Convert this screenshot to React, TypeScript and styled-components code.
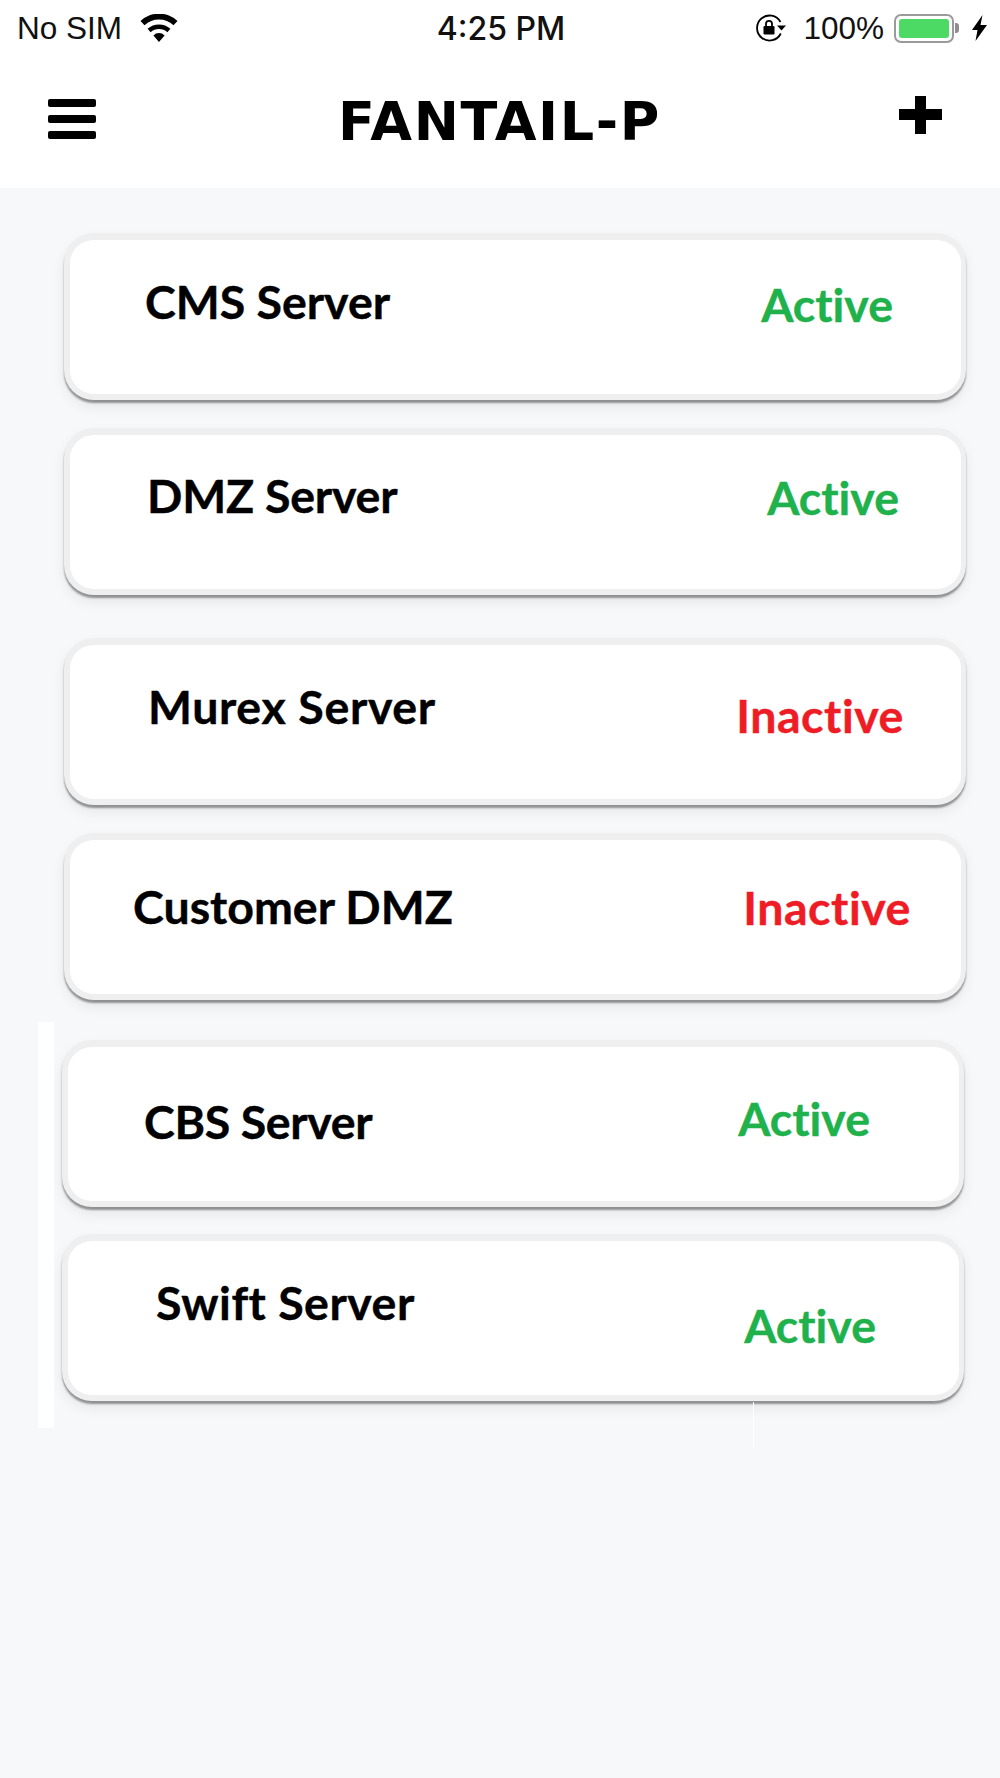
import React from "react";
import styled, { createGlobalStyle } from "styled-components";

const GlobalStyle = createGlobalStyle`
  html, body {
    margin: 0;
    padding: 0;
    background: #f7f8fa;
  }
`;

interface Server {
  name: string;
  active: boolean;
  gap: number;
  inset: number;
  tracking: number;
  nameLeft: number;
  nameTop: number;
  statusRight: number;
  statusTop: number;
}

const servers: Server[] = [
  { name: "CMS Server", active: true, gap: 45, inset: 64, tracking: 0, nameLeft: 75, nameTop: 34, statusRight: 68, statusTop: 37 },
  { name: "DMZ Server", active: true, gap: 28, inset: 64, tracking: -0.2, nameLeft: 77, nameTop: 33, statusRight: 62, statusTop: 35 },
  { name: "Murex Server", active: false, gap: 43, inset: 64, tracking: 0.65, nameLeft: 78, nameTop: 34, statusRight: 57, statusTop: 43 },
  { name: "Customer DMZ", active: false, gap: 28, inset: 64, tracking: 0, nameLeft: 63, nameTop: 39, statusRight: 50, statusTop: 40 },
  { name: "CBS Server", active: true, gap: 40, inset: 62, tracking: -0.35, nameLeft: 76, nameTop: 47, statusRight: 89, statusTop: 44 },
  { name: "Swift Server", active: true, gap: 27, inset: 62, tracking: 0.5, nameLeft: 88, nameTop: 34, statusRight: 83, statusTop: 57 },
];

const App: React.FC = () => {
  return (
    <Page>
      <GlobalStyle />
      <Header>
        <StatusBar>
          <StatusLeft>
            <span>No SIM</span>
            <svg width="38" height="28" viewBox="0 0 38 28">
              <path d="M19 28l-5.6-6.6a8 8 0 0 1 11.2 0z" fill="#000" />
              <path d="M10.6 18.2a12.4 12.4 0 0 1 16.8 0l3-3.4a17 17 0 0 0-22.8 0z" fill="#000" />
              <path d="M4.5 11.2a21.5 21.5 0 0 1 29 0L37.500 7A27 27 0 0 0 .5 7z" fill="#000" />
            </svg>
          </StatusLeft>
          <Clock>4:25 PM</Clock>
          <StatusRight>
            <svg width="32" height="28" viewBox="0 0 32 28">
              <path d="M25.500 8A12.500 12.500 0 1 0 25.800 19.500" fill="none" stroke="#000" strokeWidth="1.8" />
              <path d="M22 11.500h9l-4.500 5z" fill="#000" />
              <rect x="8.500" y="12" width="11" height="8.500" rx="1.2" fill="#000" />
              <path d="M11 12V9.800a3 3 0 0 1 6 0V12" fill="none" stroke="#000" strokeWidth="1.8" />
            </svg>
            <Percent>100%</Percent>
            <Battery>
              <BatteryFill />
            </Battery>
            <BatteryNub />
            <svg width="15" height="26" viewBox="0 0 15 26">
              <path d="M10.500 0L0 15h5.500L3.500 26 15 10H8.500z" fill="#000" />
            </svg>
          </StatusRight>
        </StatusBar>
        <NavBar>
          <MenuIcon>
            <MenuBar />
            <MenuBar />
            <MenuBar />
          </MenuIcon>
          <Title>FANTAIL-P</Title>
          <AddIcon width="43" height="38" viewBox="0 0 43 38">
            <path d="M16 0h11v13h16v11H27v14H16V24H0V13h16z" fill="#000" />
          </AddIcon>
        </NavBar>
      </Header>

      <ServerList>
        {servers.map((s) => (
          <Card key={s.name} $gap={s.gap} $inset={s.inset}>
            <ServerName $left={s.nameLeft} $top={s.nameTop} $tracking={s.tracking}>
              {s.name}
            </ServerName>
            <ServerStatus $active={s.active} $right={s.statusRight} $top={s.statusTop}>
              {s.active ? "Active" : "Inactive"}
            </ServerStatus>
          </Card>
        ))}
        <LeftStrip />
        <ThinLine />
      </ServerList>
    </Page>
  );
};

export default App;

const Page = styled.div`
  width: 1000px;
  height: 1778px;
  overflow: hidden;
  background: #f7f8fa;
`;

const Header = styled.header`
  height: 188px;
  background: #fff;
  display: flex;
  flex-direction: column;
`;

const StatusBar = styled.div`
  display: grid;
  grid-template-columns: 1fr auto 1fr;
  align-items: center;
  height: 56px;
  padding: 0 13px 0 17px;
  font-family: "Liberation Sans", Arial, sans-serif;
  font-size: 31.5px;
  color: #111;
`;

const StatusLeft = styled.div`
  display: flex;
  align-items: center;
  gap: 18px;
`;

const Clock = styled.div`
  font-family: Inter, "Liberation Sans", sans-serif;
  font-weight: 500;
  font-size: 32px;
  margin-right: 2px;
`;

const StatusRight = styled.div`
  display: flex;
  align-items: center;
  justify-content: flex-end;
`;

const Percent = styled.span`
  margin: 0 10px 0 16px;
`;

const Battery = styled.div`
  width: 60px;
  height: 29px;
  box-sizing: border-box;
  border: 2px solid #9a9a9a;
  border-radius: 7px;
  padding: 3px;
`;

const BatteryFill = styled.div`
  width: 100%;
  height: 100%;
  background: #4cd964;
  border-radius: 3px;
`;

const BatteryNub = styled.div`
  width: 4px;
  height: 10px;
  margin: 0 13px 0 1px;
  background: #8e8e8e;
  border-radius: 0 3px 3px 0;
`;

const NavBar = styled.div`
  flex: 1;
  display: flex;
  align-items: center;
  justify-content: space-between;
  padding: 0 58px 0 48px;
`;

const MenuIcon = styled.div`
  width: 48px;
  height: 40px;
  margin-bottom: 6px;
  display: flex;
  flex-direction: column;
  justify-content: space-between;
`;

const MenuBar = styled.div`
  height: 8px;
  background: #000;
  border-radius: 2px;
`;

const Title = styled.h1`
  margin: 0 0 0 4px;
  font-family: "DejaVu Sans", Verdana, sans-serif;
  font-weight: 700;
  font-size: 54px;
  letter-spacing: 1.6px;
  line-height: 1;
  color: #000;
`;

const AddIcon = styled.svg`
  margin-bottom: 14px;
`;

const ServerList = styled.main`
  position: relative;
  display: flow-root;
`;

const Card = styled.section<{ $gap: number; $inset: number }>`
  box-sizing: border-box;
  display: flex;
  justify-content: space-between;
  align-items: flex-start;
  width: 902px;
  height: 167px;
  margin-top: ${(p) => p.$gap}px;
  margin-left: ${(p) => p.$inset}px;
  background: #fff;
  border-style: solid;
  border-color: #efefef;
  border-width: 7px 5px 6px 6px;
  border-radius: 30px;
  box-shadow: 0 3px 2px rgba(0, 0, 0, 0.38), 0 7px 14px rgba(0, 0, 0, 0.07);
`;

const ServerName = styled.div<{ $left: number; $top: number; $tracking: number }>`
  padding: ${(p) => p.$top}px 0 0 ${(p) => p.$left}px;
  font-family: Lato, "Open Sans", sans-serif;
  font-weight: 700;
  font-size: 46.5px;
  font-variant-ligatures: none;
  letter-spacing: ${(p) => p.$tracking}px;
  line-height: 1.2;
  color: #000;
  -webkit-text-stroke: 0.4px #000;
`;

const ServerStatus = styled.div<{ $active: boolean; $right: number; $top: number }>`
  padding: ${(p) => p.$top}px ${(p) => p.$right}px 0 0;
  font-family: Lato, "Open Sans", sans-serif;
  font-weight: 700;
  font-size: 46.5px;
  font-variant-ligatures: none;
  letter-spacing: ${(p) => (p.$active ? 0 : 0.55)}px;
  line-height: 1.2;
  color: ${(p) => (p.$active ? "#1fb14c" : "#ee1c25")};
  -webkit-text-stroke: 0.4px ${(p) => (p.$active ? "#1fb14c" : "#ee1c25")};
`;

const LeftStrip = styled.div`
  position: absolute;
  left: 38px;
  top: 834px;
  width: 16px;
  height: 406px;
  background: #fff;
`;

const ThinLine = styled.div`
  position: absolute;
  left: 753px;
  top: 1214px;
  width: 1px;
  height: 46px;
  background: #fff;
`;
